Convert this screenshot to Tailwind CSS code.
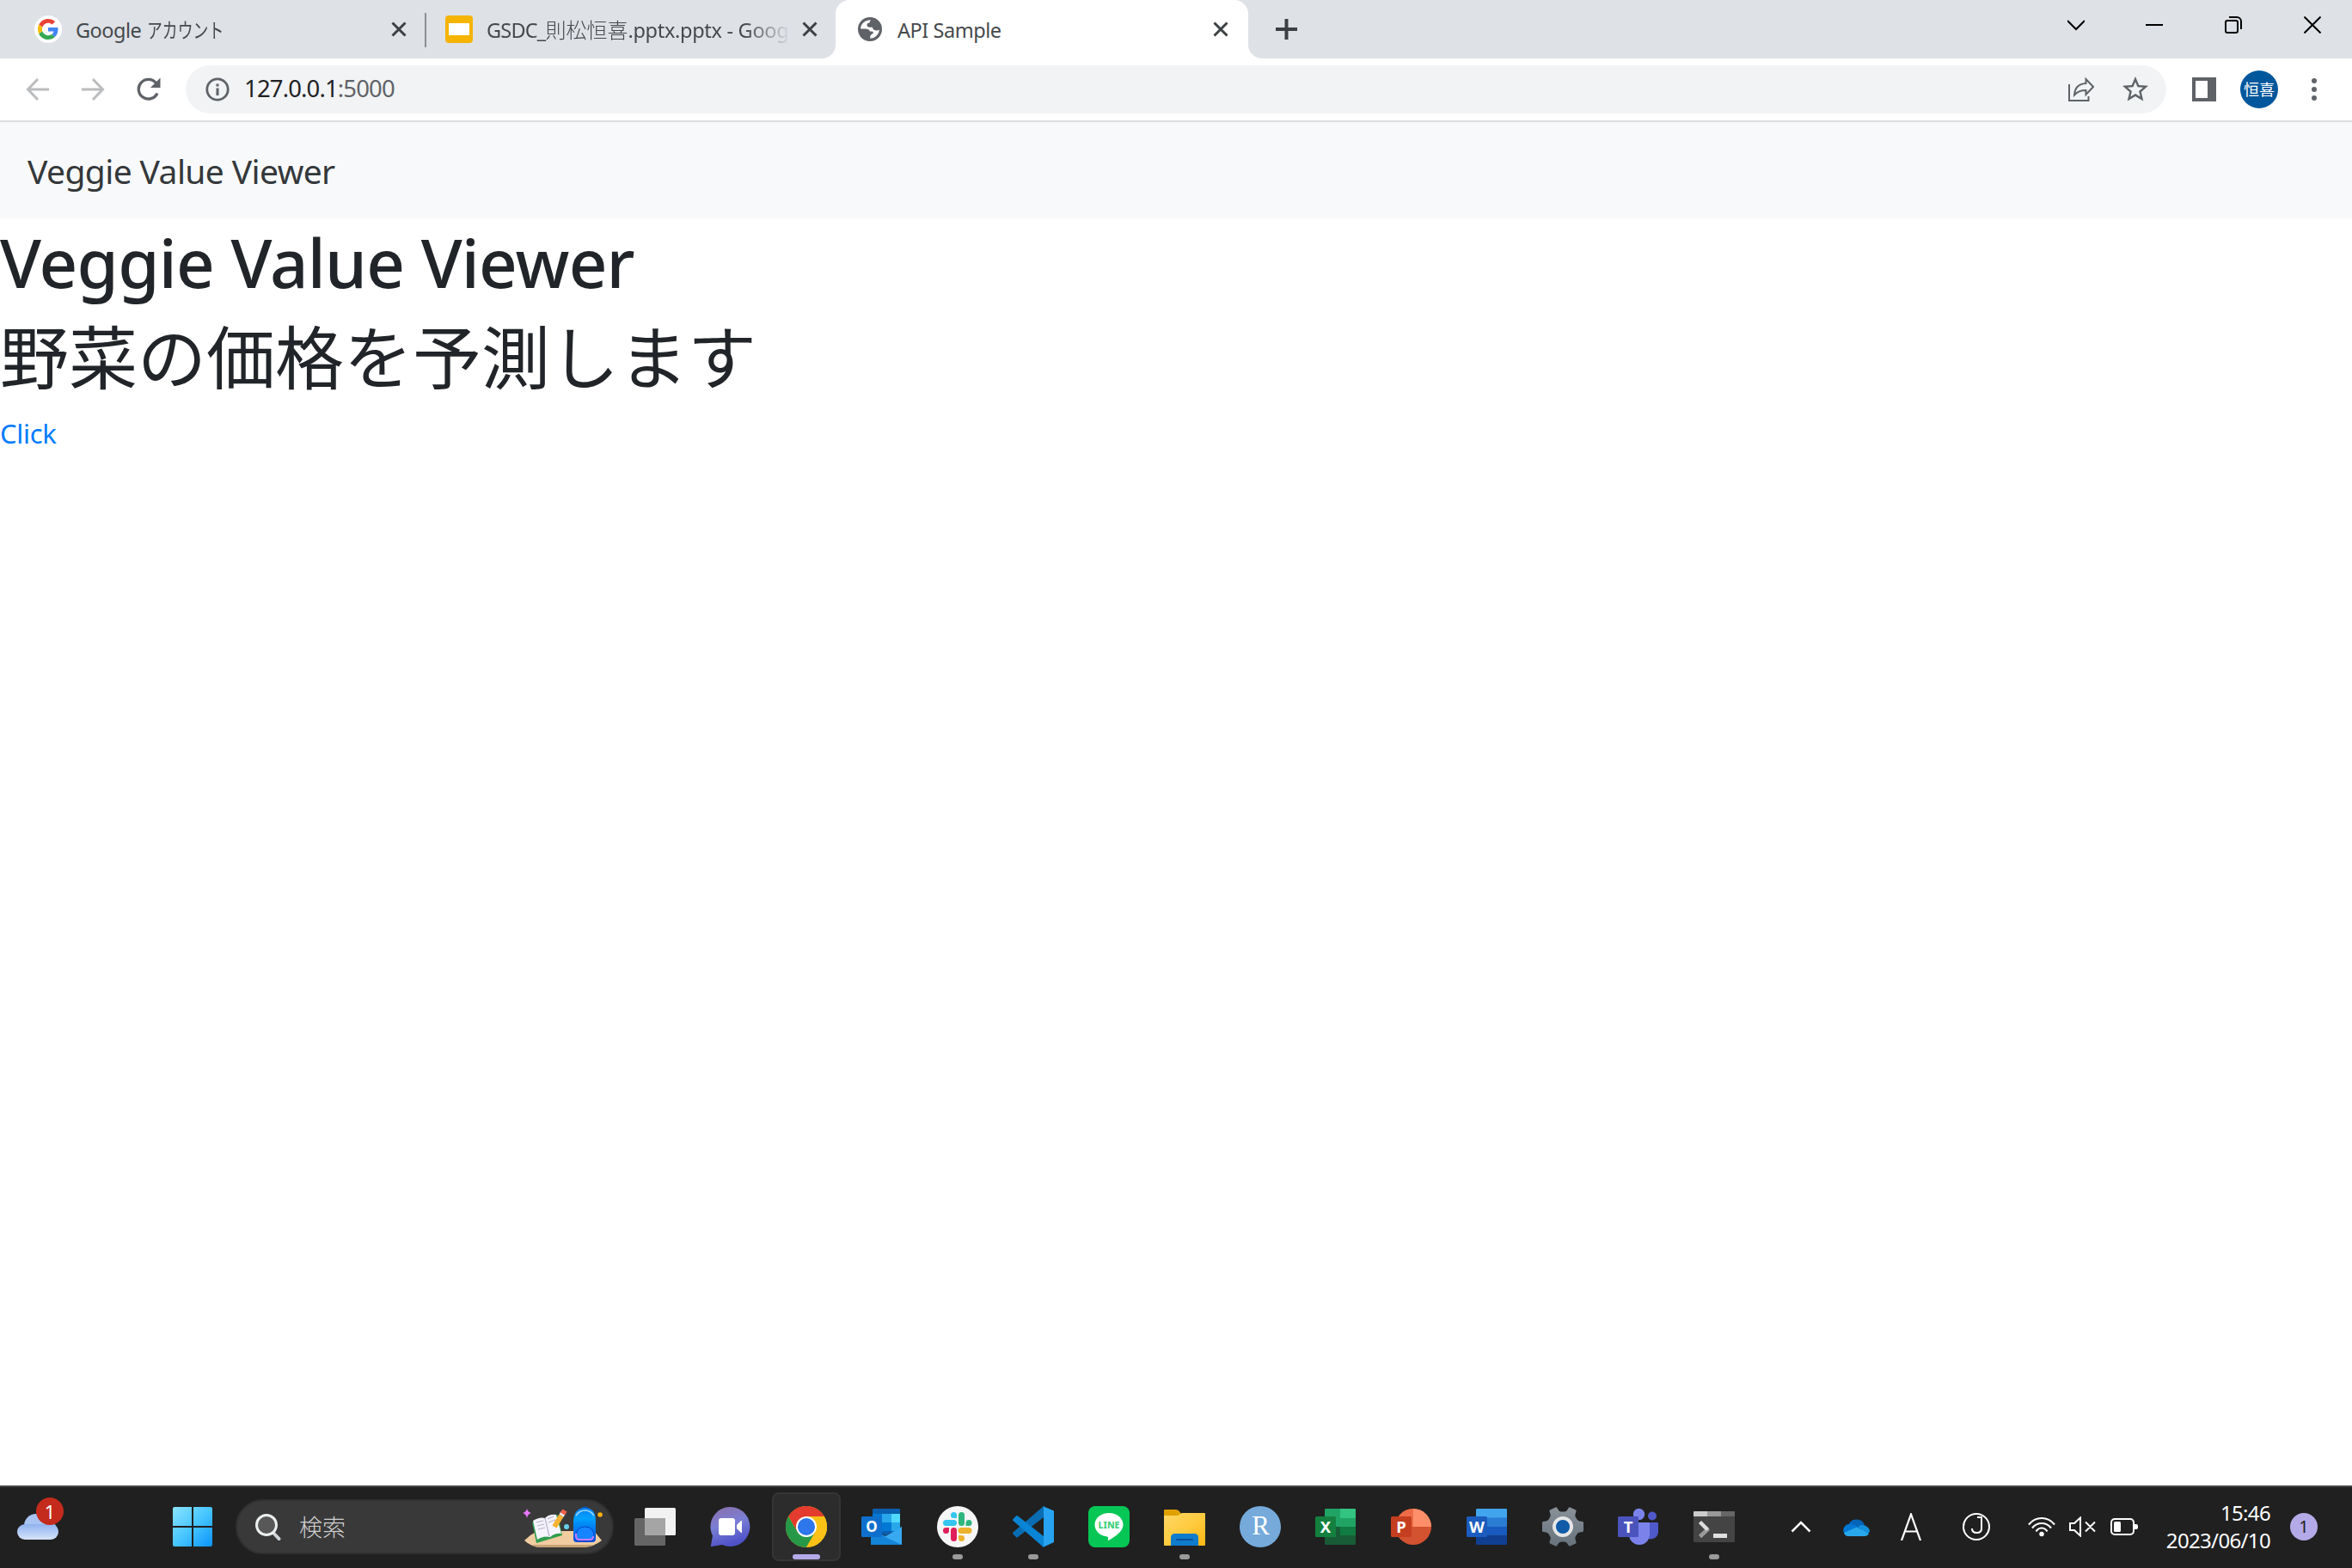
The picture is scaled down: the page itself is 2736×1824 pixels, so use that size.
<!DOCTYPE html>
<html lang="ja">
<head>
<meta charset="utf-8">
<title>API Sample</title>
<script src="https://cdn.jsdelivr.net/npm/@tailwindcss/browser@4"></script>
</head>
<body class="w-[2736px] h-[1824px] overflow-hidden bg-white font-['Noto_Sans','Noto_Sans_CJK_JP',sans-serif] flex flex-col">

<!-- tab strip -->
<header class="h-[68px] shrink-0 bg-[#dee1e6] flex text-[23.5px] leading-[32px] text-[#45494d] whitespace-nowrap">
  <div class="w-[494px] pl-10 pr-[21px] flex items-center">
    <span class="size-8 rounded-full bg-white flex items-center justify-center">
      <svg class="size-6" viewBox="0 0 48 48"><path fill="#EA4335" d="M24 9.5c3.54 0 6.71 1.22 9.21 3.6l6.85-6.85C35.9 2.38 30.47 0 24 0 14.62 0 6.51 5.38 2.56 13.22l7.98 6.19C12.43 13.72 17.74 9.5 24 9.5z"/><path fill="#4285F4" d="M46.98 24.55c0-1.57-.15-3.09-.38-4.55H24v9.02h12.94c-.58 2.96-2.26 5.48-4.78 7.18l7.73 6c4.51-4.18 7.09-10.36 7.09-17.65z"/><path fill="#FBBC05" d="M10.53 28.59c-.48-1.45-.76-2.99-.76-4.59s.27-3.14.76-4.59l-7.98-6.19C.92 16.46 0 20.12 0 24c0 3.88.92 7.54 2.56 10.78l7.97-6.19z"/><path fill="#34A853" d="M24 48c6.48 0 11.93-2.13 15.89-5.81l-7.73-6c-2.15 1.45-4.92 2.3-8.16 2.3-6.26 0-11.57-4.22-13.47-9.91l-7.98 6.19C6.51 42.62 14.62 48 24 48z"/></svg>
    </span>
    <span class="ml-4 pt-[2px] flex"><span class="tracking-[-0.5px] mr-[7px]">Google</span><span class="inline-block origin-left scale-x-[.76]">アカウント</span></span>
    <svg class="ml-auto w-[18px] h-[18px]" viewBox="0 0 18 18" fill="none" stroke="#3c4043" stroke-width="3"><path d="M1.500 1.500l15 15M16.500 1.500l-15 15"/></svg>
  </div>
  <div class="w-[2px] h-10 mt-[15px] bg-[#8b8f94]"></div>
  <div class="w-[476px] pl-[22px] pr-[21px] flex items-center">
    <span class="size-8 rounded-[4px] bg-[#f5b400] flex items-center justify-center"><span class="w-6 h-[14px] bg-white"></span></span>
    <span class="ml-4 pt-[2px] [mask-image:linear-gradient(to_right,black_300px,transparent_354px)]"><span class="tracking-[-0.8px]">GSDC_</span><span class="text-[24px] font-light">則松恒喜</span><span class="tracking-[-0.3px]">.pptx.pptx - </span><span class="tracking-[-0.3px]">Goog</span></span>
    <svg class="ml-auto shrink-0 w-[18px] h-[18px]" viewBox="0 0 18 18" fill="none" stroke="#3c4043" stroke-width="3"><path d="M1.500 1.500l15 15M16.500 1.500l-15 15"/></svg>
  </div>
  <div class="relative w-[480px] pl-[26px] pr-[23px] bg-white rounded-t-[16px] flex items-center">
    <svg class="absolute -left-4 bottom-0 size-4" viewBox="0 0 16 16"><path fill="#fff" d="M16 0V16H0A16 16 0 0 0 16 0Z"/></svg>
    <svg class="absolute -right-4 bottom-0 size-4" viewBox="0 0 16 16"><path fill="#fff" d="M0 0V16H16A16 16 0 0 1 0 0Z"/></svg>
    <svg class="size-7" viewBox="0 0 28 28"><circle cx="14" cy="14" r="14" fill="#5f6368"/><path fill="#fff" d="M15 3.200C9.500 2.800 4.200 6.500 3.200 12l0 1.600h5.600c2.600 0 4.600 1 5.200 3h2.300c1.600 0 2 1.500 1 2.500l-2 1.500c-.8.700-1 1.500-1 2.500v1.600c5.500 0 10.200-4.400 10.500-10.200-1 .6-2 1-3.500 1-2.700 0-4.300-1.500-4.300-3.700h-3.500c-2 0-3-1.200-3-2.800 0-1.700 1.500-2.500 3-2.500.3-1.700 1-2.600 1.500-3.300z"/></svg>
    <span class="ml-[18px] pt-[2px] tracking-[-0.45px]">API Sample</span>
    <svg class="ml-auto w-[18px] h-[18px]" viewBox="0 0 18 18" fill="none" stroke="#3c4043" stroke-width="3"><path d="M1.500 1.500l15 15M16.500 1.500l-15 15"/></svg>
  </div>
  <svg class="ml-8 mt-[22px] w-[25px] h-6" viewBox="0 0 25 24" fill="none" stroke="#3c4043" stroke-width="4"><path d="M0 12h25M12.500 0v24"/></svg>
  <div class="ml-auto pr-9 flex gap-[72px] pt-[19px]">
    <svg class="size-5 -mr-[1px]" viewBox="0 0 20 20" fill="none" stroke="#000" stroke-width="2"><path d="M0 5l10 10L20 5"/></svg>
    <svg class="size-5" viewBox="0 0 20 20" fill="none" stroke="#000" stroke-width="2"><path d="M0 10h20"/></svg>
    <svg class="size-5" viewBox="0 0 20 20" fill="none" stroke="#000" stroke-width="2"><rect x="1" y="5" width="14" height="14" rx="2"/><path d="M5 1h9a5 5 0 0 1 5 5v9"/></svg>
    <svg class="size-5" viewBox="0 0 20 20" fill="none" stroke="#000" stroke-width="2"><path d="M.5.5l19 19M19.500.5l-19 19"/></svg>
  </div>
</header>

<!-- toolbar -->
<div class="h-[74px] shrink-0 border-b-2 border-[#dadce0] flex items-center">
  <svg class="ml-[30px] w-7 h-7" viewBox="0 0 28 28" fill="none" stroke="#babcbe" stroke-width="3"><path d="M27 14H3M14 2L2.500 14L14 26"/></svg>
  <svg class="ml-[37px] w-7 h-7" viewBox="0 0 28 28" fill="none" stroke="#babcbe" stroke-width="3"><path d="M0 14h24M13 2l11.500 12L13 26"/></svg>
  <svg class="ml-9 w-7 h-7" viewBox="0 0 28 28"><path d="M24 18.500A11.400 11.400 0 1 1 22.500 6.500" fill="none" stroke="#5f6368" stroke-width="3.300"/><path d="M27.500 0.500V12H16z" fill="#5f6368"/></svg>
  <div class="ml-[29px] w-[2304px] h-14 rounded-full bg-[#f1f3f4] flex items-center pl-[23px] pr-[18px]">
    <svg class="size-7" viewBox="0 0 28 28"><circle cx="14" cy="14" r="12.200" fill="none" stroke="#5f6368" stroke-width="2.800"/><path fill="#5f6368" d="M12.500 12.500h3V21h-3zM12.500 7.500h3v3h-3z"/></svg>
    <span class="ml-[17px] -mt-[2px] text-[27.5px] leading-[36px] tracking-[-0.85px] text-[#202124]">127.0.0.1<span class="text-[#5f6368]">:5000</span></span>
    <svg class="ml-auto w-[30px] h-7" viewBox="0 0 30 28" fill="none" stroke="#5f6368" stroke-width="2"><path d="M1 8v19h22.500v-5"/><path d="M7 20.500C7.500 12 12 7.500 20.500 7V2L29 11l-8.500 9v-5C14 15 10.500 16.500 7 20.500z"/></svg>
    <svg class="ml-[30px] size-9" viewBox="0 0 24 24" fill="#5f6368"><path d="M22 9.240l-7.190-.62L12 2 9.190 8.630 2 9.240l5.460 4.730L5.820 21 12 17.270 18.180 21l-1.630-7.030L22 9.240zM12 15.400l-3.760 2.270 1-4.280-3.320-2.880 4.380-.38L12 6.100l1.710 4.040 4.380.38-3.320 2.880 1 4.280L12 15.400z"/></svg>
  </div>
  <svg class="ml-[30px] size-7" viewBox="0 0 28 28"><path fill="#5f6368" d="M0 0h28v28H0z"/><path fill="#fff" d="M4 4h14v20H4z"/></svg>
  <div class="ml-7 size-11 rounded-full bg-[#01579b] text-white text-[18px] leading-[44px] text-center">恒喜</div>
  <svg class="ml-[39px] w-[6px] h-[26px]" viewBox="0 0 6 26" fill="#5f6368"><circle cx="3" cy="3" r="3"/><circle cx="3" cy="13" r="3"/><circle cx="3" cy="23" r="3"/></svg>
</div>

<!-- page -->
<main class="flex-1 text-[#212529]">
  <nav class="h-28 bg-[#f8f9fa] pl-8 pt-[2px] flex items-center text-[39px] leading-[60px] tracking-[-0.6px] text-[#34383b]">Veggie Value Viewer</nav>
  <h1 class="h-28 pt-[3px] text-[78px] leading-[96px] tracking-[-0.8px] font-medium">Veggie Value Viewer</h1>
  <h1 class="h-28 -mt-[3px] mb-[3px] text-[80px] leading-[96px] font-['Noto_Sans_CJK_JP',sans-serif]">野菜の価格を予測します</h1>
  <p class="pt-[2px] text-[31px] leading-[48px] tracking-[-0.3px]"><a class="text-[#007bff]">Click</a></p>
</main>

<!-- taskbar -->
<footer class="h-24 shrink-0 bg-[#202020] border-t-2 border-[#444] flex items-center text-white pb-[2px]">
  <div class="relative ml-5 w-12 h-[30px]">
    <svg class="w-12 h-[30px]" viewBox="0 0 48 30"><defs><linearGradient id="cl" x1="0" y1="0" x2="0" y2="1"><stop offset="0" stop-color="#8fb2ee"/><stop offset="1" stop-color="#d6e4fb"/></linearGradient></defs><circle cx="22" cy="14" r="14" fill="#a9c4f3"/><circle cx="38" cy="19" r="9" fill="#9dbbf0"/><rect y="12" width="48" height="18" rx="9" fill="url(#cl)"/></svg>
    <span class="absolute left-[22px] -top-[19px] size-8 rounded-full bg-[#c42b1c] text-[22px] leading-8 text-center">1</span>
  </div>
  <svg class="ml-[133px] size-[46px]" viewBox="0 0 46 46"><defs><linearGradient id="wn" x1="0" y1="0" x2="46" y2="46" gradientUnits="userSpaceOnUse"><stop stop-color="#8be3ff"/><stop offset=".5" stop-color="#48c6ff"/><stop offset="1" stop-color="#0a93fb"/></linearGradient></defs><path fill="url(#wn)" d="M2 0H22V22H0V2A2 2 0 0 1 2 0ZM24 0H44A2 2 0 0 1 46 2V22H24ZM0 24H22V46H2A2 2 0 0 1 0 44ZM24 24H46V44A2 2 0 0 1 44 46H24Z"/></svg>
  <div class="ml-[27px] w-[440px] h-16 rounded-full bg-[#393939] border-2 border-[#303030] flex items-center pl-[21px] pr-[11px]">
    <svg class="w-[30px] h-[31px]" viewBox="0 0 30 31"><path d="M19 20l8.500 9" stroke="#d0d5d8" stroke-width="4" stroke-linecap="round"/><circle cx="13" cy="13" r="11.500" fill="#585858" stroke="#eceff0" stroke-width="3"/></svg>
    <span class="ml-[21px] text-[27px] leading-[36px] text-[#cfcfcf] font-['Noto_Sans_CJK_JP',sans-serif] font-light">検索</span>
    <svg class="ml-auto w-[94px] h-[50px]" viewBox="0 0 94 50"><defs><linearGradient id="bp" x1="0" y1="0" x2="0" y2="1"><stop stop-color="#0a7cf0"/><stop offset=".3" stop-color="#00a2ff"/><stop offset="1" stop-color="#0048d8"/></linearGradient></defs>
      <path fill="#f0cca0" d="M3 41Q10 34 18 30H84Q89 36 93 41Q84 48 72 49H22Q10 48 3 41Z"/><path fill="#c9a277" d="M11 46H85Q78 49 72 49H22Q15 49 11 46Z"/>
      <path fill="#e879f9" d="M6 4q1 4 5 5-4 1-5 6-1-5-5-6 4-1 5-5z"/>
      <path fill="#2f9c4c" d="M12 20l30-9 5 24-30 9z"/><path fill="#f5f3fb" d="M13 18q8-5 14-3 5-5 13-4l6 22q-7-1-13 4-8-2-15 3z"/><path stroke="#b8b2cc" stroke-width="1.200" fill="none" d="M27 15l5 21M17 20l8-2M18 24l8-2M19 28l8-2M30 16l7-3M31 20l8-3"/>
      <path stroke="#f9b233" stroke-width="6" d="M38 25L46 12"/><path stroke="#e8e8f0" stroke-width="6" d="M46 12l2-3"/><path stroke="#f4604c" stroke-width="6" d="M47.500 10l2.500-4"/><circle cx="52" cy="25" r="3" fill="#66d0e8"/><circle cx="91" cy="11" r="2.800" fill="#ffb300"/>
      <path d="M69 5q4-5 9 0" fill="none" stroke="#0b4f9e" stroke-width="2.500"/><path fill="url(#bp)" d="M60 18Q61 3 73.500 3T86 18V39Q86 43 82 43H64Q60 43 60 39Z"/><path d="M63 12Q67 6 73.500 6T84 12" fill="none" stroke="#9ed8ff" stroke-width="1.500"/><path fill="#1684ff" stroke="#0048c8" stroke-width="1" d="M63 37Q63 25 73.500 25T84 37Q84 41 80 41H67Q63 41 63 37Z"/><path d="M63 33v3q0 4 4 4h12q4 0 4-4" fill="none" stroke="#c77dff" stroke-width="2"/></svg>
  </div>
  <div class="ml-2 flex gap-2 *:size-20 *:flex *:items-center *:justify-center *:relative">
    <div><svg class="size-12" viewBox="0 0 48 48"><rect x="12" y="2" width="36" height="32" rx="1.500" fill="#f2f2f2"/><rect y="14" width="36" height="32" rx="1.500" fill="#808080" fill-opacity=".72"/><path d="M12 14h24v20H12z" fill="#a5a5a5"/></svg></div>
    <div><svg class="size-12" viewBox="0 0 48 48"><defs><linearGradient id="ch" x1="0" y1="0" x2=".3" y2="1"><stop stop-color="#8c6ea9"/><stop offset=".5" stop-color="#7a7fd4"/><stop offset="1" stop-color="#5052c8"/></linearGradient></defs><path fill="url(#ch)" d="M23 1a23 23 0 1 1-9 44L2 47q-1.500 0-1-1.500L3 34.500A23 23 0 0 1 23 1z"/><rect x="10" y="14" width="19" height="20" rx="3" fill="#fff"/><path fill="#fff" d="M31 22l5-5h1v14h-1l-5-5z"/></svg></div>
    <div class="rounded-[8px] bg-[#2c2c2c] border-2 border-[#353535]"><svg class="size-12" viewBox="0 0 48 48"><circle cx="24" cy="24" r="24" fill="#fbc116"/><path fill="#e33b2e" d="M3.200 12A24 24 0 0 1 44.800 12L24 12 13.600 30Z"/><path fill="#279847" d="M3.200 12A24 24 0 0 0 24 48L34.400 30 24 36 13.600 30Z"/><path fill="#fbc116" d="M24 48L34.400 30 34.400 18 24 12H44.800A24 24 0 0 1 24 48Z"/><circle cx="24" cy="24" r="12" fill="#fff"/><circle cx="24" cy="24" r="10" fill="#2d76ec"/></svg><i class="absolute left-[22px] top-[70px] w-8 h-[6px] rounded-full bg-[#b4aae8]"></i></div>
    <div><svg class="size-12" viewBox="0 0 48 48"><path fill="#0a5fb0" d="M14 3h30a1 1 0 0 1 1 1v27H13V4z"/><path fill="#28a8ea" d="M24 9h11v10H24z"/><path fill="#50d9ff" d="M35 9h10v10H35z"/><path fill="#0078d4" d="M24 19h11v10H24zM13 9h11v10H13z"/><path fill="#28a8ea" d="M35 19h10v10H35z"/><path fill="#0a5fb0" d="M13 29h25l-9 5z"/><path fill="#1c8fe0" d="M11 28l18 7 18-11v20a1 1 0 0 1-1 1H12a1 1 0 0 1-1-1z"/><path fill="#37a9f0" d="M11 45L47 24v20a1 1 0 0 1-1 1z"/><path fill="#1484d8" d="M11 28l36 17H12a1 1 0 0 1-1-1z"/><rect y="12" width="24" height="24" rx="1.500" fill="#0f6fcd"/><text x="12" y="30" text-anchor="middle" font-family="Noto Sans" font-weight="700" font-size="17" fill="#fff">O</text></svg></div>
    <div><svg class="size-12" viewBox="0 0 48 48"><circle cx="24" cy="24" r="24" fill="#f6f6f6"/><g fill="#36c5f0"><rect x="7" y="16" width="16" height="7" rx="3.500"/><path d="M23 14h-3.500A3.500 3.500 0 1 1 23 10.500z"/></g><g fill="#2eb67d"><rect x="25" y="7" width="7" height="16" rx="3.500"/><path d="M33.500 23v-3.500A3.500 3.500 0 1 1 37 23z"/></g><g fill="#ecb22e"><rect x="24.500" y="25" width="16" height="7" rx="3.500"/><path d="M25 34h3.500A3.500 3.500 0 1 1 25 37.500z"/></g><g fill="#e01e5a"><rect x="16" y="25" width="7" height="16" rx="3.500"/><path d="M14 25v3.500A3.500 3.500 0 1 1 10.500 25z"/></g></svg><i class="absolute left-[34px] top-[72px] w-3 h-[6px] rounded-full bg-[#9a9a9a]"></i></div>
    <div><svg class="size-12" viewBox="0 0 48 48"><path fill="#0a6db3" d="M36 0v13L6 36q-1 1-2 0l-3.500-3.500q-1-1 0-2z"/><path fill="#0a84d4" d="M36 48V35L6 11.500q-1-1-2 0L.5 15q-1 1 0 2z"/><path fill="#27a3f2" d="M35 0L48 5.500V42L35 48q1-1 1-2V2q0-1-1-2z"/></svg><i class="absolute left-[34px] top-[72px] w-3 h-[6px] rounded-full bg-[#9a9a9a]"></i></div>
    <div><svg class="size-12" viewBox="0 0 48 48"><rect width="48" height="48" rx="8" fill="#06c755"/><path fill="#fff" d="M24 8c9 0 16.500 5.800 16.500 13.500 0 3-1.200 6-4 9-4 4.300-13 10-13.500 9.500-.8-.6 1.200-4-1-4.500C13.500 34.500 7.500 29 7.500 21.500 7.500 13.800 15 8 24 8z"/><text x="24" y="26" text-anchor="middle" font-family="Noto Sans" font-weight="800" font-size="10.500" fill="#3ccf78">LINE</text></svg></div>
    <div><svg class="size-12" viewBox="0 0 48 48"><defs><linearGradient id="fo" x1="0" y1="0" x2="1" y2="1"><stop stop-color="#ffd766"/><stop offset=".5" stop-color="#ffcb40"/><stop offset="1" stop-color="#fbb612"/></linearGradient></defs><path fill="#e0a100" d="M0 5q0-1 1-1h13q2 0 3.500 1.500L20 9v4H0z"/><path fill="url(#fo)" d="M0 11h15q2 0 3-1l1-1q1-1 3-1h25q1 0 1 1v36q0 1-1 1H1q-1 0-1-1z"/><path fill="#0f7ccc" d="M8 46V37q0-5 5-5h22q5 0 5 5v9z"/><path stroke="#0a5296" stroke-width="2" stroke-linecap="round" d="M15 39h18"/></svg><i class="absolute left-[34px] top-[72px] w-3 h-[6px] rounded-full bg-[#9a9a9a]"></i></div>
    <div><svg class="size-12" viewBox="0 0 48 48"><circle cx="24" cy="24" r="24" fill="#75aadb"/><text x="24.500" y="33" text-anchor="middle" font-family="Liberation Serif" font-size="31" fill="#fff">R</text></svg></div>
    <div><svg class="size-12" viewBox="0 0 48 48"><path fill="#21a366" d="M12 3h17v21H11V4z"/><path fill="#33c481" d="M29 3h17q1 0 1 1v10H29z"/><path fill="#21a366" d="M29 14h18v10H29z"/><path fill="#107c41" d="M29 24h18v10H29z"/><path fill="#185c37" d="M11 24h18v10h18v10q0 1-1 1H12q-1 0-1-1z"/><rect y="12" width="24" height="24" rx="1.500" fill="#14803f"/><text x="12" y="30.500" text-anchor="middle" font-family="Noto Sans" font-weight="700" font-size="18.500" fill="#fff">X</text></svg></div>
    <div><svg class="size-12" viewBox="0 0 48 48"><circle cx="26" cy="24" r="21" fill="#d35230"/><path fill="#ed6c47" d="M5 24A21 21 0 0 1 26 3V24z"/><path fill="#ff8f6b" d="M26 3A21 21 0 0 1 47 24H26z"/><rect y="12" width="24" height="24" rx="1.500" fill="#c43e1f"/><text x="12" y="30.500" text-anchor="middle" font-family="Noto Sans" font-weight="700" font-size="18.500" fill="#fff">P</text></svg></div>
    <div><svg class="size-12" viewBox="0 0 48 48"><path fill="#41a5ee" d="M12 3h34q1 0 1 1v10H11V4z"/><path fill="#2b7cd3" d="M11 13.500h36V24H11z"/><path fill="#185abd" d="M11 24h36v10.500H11z"/><path fill="#103f91" d="M11 34.500h36V44q0 1-1 1H12q-1 0-1-1z"/><rect y="12" width="24" height="24" rx="1.500" fill="#1b5cbe"/><text x="12" y="30.500" text-anchor="middle" font-family="Noto Sans" font-weight="700" font-size="18.500" fill="#fff">W</text></svg></div>
    <div><svg class="size-12" viewBox="0 0 48 48"><defs><linearGradient id="ge" x1="0" y1="0" x2="0" y2="1"><stop stop-color="#8a9199"/><stop offset="1" stop-color="#66727c"/></linearGradient></defs><path fill="url(#ge)" d="M9 4.500L15.500 1.500q1-.5 1.700.5l2 3q1.300 1.500 3 1.500h3.600q1.700 0 3-1.500l2-3q.7-1 1.700-.5L39 4.500q.8.500.5 1.500l-1 3.500q-.5 2 .5 3.500l1.500 2.500q1 1.500 3 2l3.500.5q1 .2 1 1.200v9.600q0 1-1 1.200l-3.500.5q-2 .5-3 2L39 35q-1 1.500-.5 3.500l1 3.500q.3 1-.5 1.500l-6.500 3q-1 .5-1.700-.5l-2-3q-1.300-1.500-3-1.500h-3.600q-1.700 0-3 1.500l-2 3q-.7 1-1.700.5L9 43.500q-.8-.5-.5-1.500l1-3.500Q10 36.500 9 35l-1.500-2.500q-1-1.500-3-2L1 30q-1-.2-1-1.200V19.200Q0 18.200 1 18l3.500-.5q2-.5 3-2L9 13q1-1.500.5-3.500L8.500 6Q8.200 5 9 4.500z"/><circle cx="24" cy="24" r="10" fill="#0f5ba8" stroke="#e6e6e6" stroke-width="4"/></svg></div>
    <div><svg class="size-12" viewBox="0 0 48 48"><circle cx="24.500" cy="9.500" r="6.700" fill="#7b83eb"/><circle cx="40" cy="11.500" r="5" fill="#5059c9"/><path fill="#5059c9" d="M34 19h12q1 0 1 1v10a8.500 8.500 0 0 1-13 7z"/><path fill="#7b83eb" d="M13 19h23q1 0 1 1v13a12 12 0 0 1-24 0z"/><rect y="12" width="24" height="24" rx="1.500" fill="#4b53bc"/><text x="12" y="30.500" text-anchor="middle" font-family="Noto Sans" font-weight="700" font-size="18.500" fill="#fff">T</text></svg></div>
    <div><svg class="size-12" viewBox="0 0 48 48"><rect y="6" width="48" height="36" rx="1.500" fill="#444"/><path fill="#ccc" d="M0 12V7q0-1 1-1h15v6z"/><path fill="#999" d="M16 6h16v6H16z"/><path fill="#666" d="M32 6h15q1 0 1 1v5H32z"/><path stroke="#999" stroke-width="4.500" d="M7.500 35.500L17.500 26"/><path stroke="#ddd" stroke-width="4.500" fill="none" d="M7.500 18.500l9 9"/><path fill="#e0e0e0" d="M23 32h16v5H23z"/></svg><i class="absolute left-[34px] top-[72px] w-3 h-[6px] rounded-full bg-[#9a9a9a]"></i></div>
  </div>
  <svg class="ml-[49px] w-[24px] h-[14px]" viewBox="0 0 24 14" fill="none" stroke="#fff" stroke-width="2.500"><path d="M1.500 12.500L12 2l10.500 10.500"/></svg>
  <svg class="ml-[36px] w-8 h-[21px]" viewBox="0 0 32 21"><path fill="#0364b8" d="M7 9A10 10 0 0 1 26 8L18 14z"/><path fill="#0078d4" d="M8 7q5-1 9 3l3 2L3 18.500A7 7 0 0 1 8 7z"/><path fill="#1490df" d="M18 10q6-4 11 0 3 2 3 6L28 19z"/><path fill="#28a8ea" d="M2 17L17 10.500 31 18q-1.500 3-5 3H7q-4 0-5-4z"/></svg>
  <svg class="ml-9 w-6 h-8" viewBox="0 0 24 32" fill="none" stroke="#fff" stroke-width="2.200"><path d="M1 32L12 1.500 23 32M5 21.500h14"/></svg>
  <svg class="ml-12 size-8" viewBox="0 0 32 32" fill="none" stroke="#fff" stroke-width="2"><circle cx="16" cy="16" r="15"/><path d="M17 5h5v13q0 5-5.500 5T11 18" /></svg>
  <svg class="ml-11 w-8 h-[24px]" viewBox="0 0 32 24" fill="none" stroke="#fff" stroke-width="2.200"><path d="M1 9.500Q7 2 16 2t15 7.500M5 13.500Q9.500 8 16 8t11 5.500M9.500 17.500Q12 13.500 16 13.500t6.500 4"/><circle cx="16" cy="20.500" r="2" fill="#fff" stroke-width="1.500"/></svg>
  <svg class="ml-4 w-8 h-6" viewBox="0 0 32 24" fill="none" stroke="#fff" stroke-width="2"><path d="M1 8h5l7-6.500v21L6 16H1zM19 6.500l11 11M30 6.500l-11 11"/></svg>
  <svg class="ml-4 w-8 h-5" viewBox="0 0 32 20"><rect x="1" y="1" width="26" height="18" rx="4" fill="none" stroke="#fff" stroke-width="2"/><rect x="4" y="4" width="8" height="12" rx="1.500" fill="#fff"/><path fill="#fff" d="M28 7h2q2 0 2 2v2q0 2-2 2h-2z"/></svg>
  <div class="ml-auto text-right text-[24px] leading-8 tracking-[-0.65px] whitespace-nowrap"><div>15:46</div><div>2023/06/10</div></div>
  <span class="ml-[23px] mr-10 size-8 rounded-full bg-[#b4aae8] text-[#202020] text-[20px] leading-8 text-center">1</span>
</footer>
</body>
</html>
